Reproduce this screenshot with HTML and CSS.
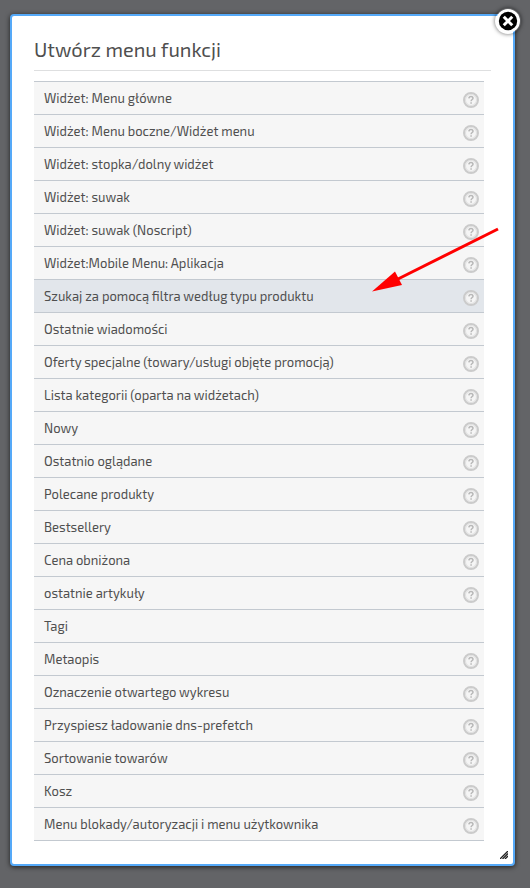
FILE: index.html
```html
<!DOCTYPE html>
<html lang="pl">
<head>
    <meta charset="utf-8">
    <title>Utwórz menu funkcji</title>
    <link rel="stylesheet" href="styles.css">
</head>
<body>
    <svg class="symbols" aria-hidden="true">
        <symbol id="help" viewBox="0 0 16 16">
            <circle cx="8" cy="8" r="7" fill="#f5f5f5" stroke="#cbcbcb" stroke-width="2"/>
            <circle cx="8" cy="8" r="5.5" fill="none" stroke="#e0e0e0" stroke-width="1"/>
            <path d="M5.9 6.4C6 5 6.900 4.400 8 4.400c1.200 0 2 .700 2 1.800C10 7.500 8.200 7.500 8.100 9.200M8.100 10.300v1.500" fill="none" stroke="#b8b8b8" stroke-width="1.500"/>
        </symbol>
    </svg>

    <div class="modal">
        <button class="close" aria-label="Zamknij">
            <svg width="26" height="26" viewBox="0 0 26 26">
                <circle cx="13" cy="13" r="12" fill="#fff"/>
                <circle cx="13" cy="13" r="9.2" fill="#000"/>
                <path d="M9.8 9.8l6.4 6.4M16.2 9.8l-6.4 6.4" stroke="#fff" stroke-width="3" stroke-linecap="square"/>
            </svg>
        </button>

        <h1 class="title">Utwórz menu funkcji</h1>

        <ul class="widgets">
            <li><span>Widżet: Menu główne</span><svg class="help"><use href="#help"/></svg></li>
            <li><span>Widżet: Menu boczne/Widżet menu</span><svg class="help"><use href="#help"/></svg></li>
            <li><span>Widżet: stopka/dolny widżet</span><svg class="help"><use href="#help"/></svg></li>
            <li><span>Widżet: suwak</span><svg class="help"><use href="#help"/></svg></li>
            <li><span>Widżet: suwak (Noscript)</span><svg class="help"><use href="#help"/></svg></li>
            <li><span>Widżet:Mobile Menu: Aplikacja</span><svg class="help"><use href="#help"/></svg></li>
            <li class="active"><span>Szukaj za pomocą filtra według typu produktu</span><svg class="help"><use href="#help"/></svg></li>
            <li><span>Ostatnie wiadomości</span><svg class="help"><use href="#help"/></svg></li>
            <li><span>Oferty specjalne (towary/usługi objęte promocją)</span><svg class="help"><use href="#help"/></svg></li>
            <li><span>Lista kategorii (oparta na widżetach)</span><svg class="help"><use href="#help"/></svg></li>
            <li><span>Nowy</span><svg class="help"><use href="#help"/></svg></li>
            <li><span>Ostatnio oglądane</span><svg class="help"><use href="#help"/></svg></li>
            <li><span>Polecane produkty</span><svg class="help"><use href="#help"/></svg></li>
            <li><span>Bestsellery</span><svg class="help"><use href="#help"/></svg></li>
            <li><span>Cena obniżona</span><svg class="help"><use href="#help"/></svg></li>
            <li><span>ostatnie artykuły</span><svg class="help"><use href="#help"/></svg></li>
            <li><span>Tagi</span></li>
            <li><span>Metaopis</span><svg class="help"><use href="#help"/></svg></li>
            <li><span>Oznaczenie otwartego wykresu</span><svg class="help"><use href="#help"/></svg></li>
            <li><span>Przyspiesz ładowanie dns-prefetch</span><svg class="help"><use href="#help"/></svg></li>
            <li><span>Sortowanie towarów</span><svg class="help"><use href="#help"/></svg></li>
            <li><span>Kosz</span><svg class="help"><use href="#help"/></svg></li>
            <li><span>Menu blokady/autoryzacji i menu użytkownika</span><svg class="help"><use href="#help"/></svg></li>
        </ul>

        <svg class="arrow" width="128" height="66" viewBox="0 0 128 66">
            <path d="M126 2L26 52" stroke="#f00" stroke-width="3"/>
            <path d="M0 64.500L23 44.500L30 58Z" fill="#f00"/>
        </svg>

        <svg class="resize" width="8" height="8" viewBox="0 0 8 8">
            <path d="M0 8L8 0M2.500 8L8 2.500M5 8L8 5" stroke="#222" stroke-width="1.300"/>
        </svg>
    </div>
</body>
</html>
```
FILE: styles.css
```css
body {
    margin: 0;
    padding: 14px 15px 22px 10px;
    background: #636467;
    font-family: "Exo 2", Roboto, sans-serif;
    color: #4f4f4f;
}
.symbols {
    position: absolute;
    width: 0;
    height: 0;
}
.modal {
    position: relative;
    box-sizing: border-box;
    height: 852px;
    padding: 20px 22px 0;
    background: #fff;
    border: 2px solid #55a9f8;
    border-radius: 4px;
    box-shadow: 0 1px 5px rgba(0, 0, 0, 0.7);
}
.title {
    margin: 0 0 10px;
    height: 34px;
    line-height: 27px;
    border-bottom: 1px solid #dedfe0;
    font-size: 20px;
    font-weight: 400;
}
.widgets {
    list-style: none;
    margin: 0 7px 0 0;
    padding: 0;
    border-top: 1px solid #c3c9d0;
}
.widgets li {
    display: flex;
    justify-content: space-between;
    align-items: center;
    box-sizing: border-box;
    height: 33px;
    padding: 0 5px 0 10px;
    background: #f6f6f6;
    border-bottom: 1px solid #c3c9d0;
    font-size: 13px;
}
.widgets .active {
    background: #e2e6eb;
}
.help {
    width: 16px;
    height: 16px;
    margin-top: 4px;
}
.close {
    position: absolute;
    top: -8px;
    right: -8px;
    width: 26px;
    height: 26px;
    padding: 0;
    border: none;
    border-radius: 50%;
    background: none;
    box-shadow: 0 0 4px rgba(0, 0, 0, 0.6);
    cursor: pointer;
}
.close svg {
    display: block;
}
.arrow {
    position: absolute;
    top: 211px;
    left: 360px;
}
.resize {
    position: absolute;
    right: 5px;
    bottom: 5px;
}
```
